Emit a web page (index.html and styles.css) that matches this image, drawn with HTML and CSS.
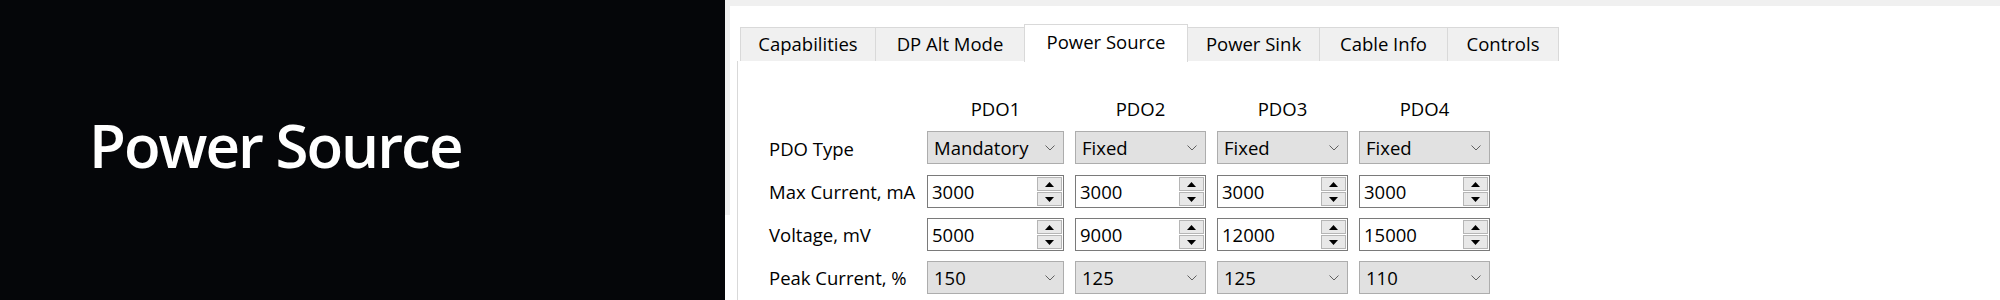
FILE: index.html
```html
<!DOCTYPE html>
<html lang="en">
<head>
    <meta charset="UTF-8">
    <meta name="viewport" content="width=device-width, initial-scale=1.0">
    <title>Power Source</title>
    <link rel="stylesheet" href="styles.css">
</head>
<body>
    <div class="screen">
        <!-- Slide caption -->
        <section class="hero">
            <h1 class="hero-title">Power Source</h1>
        </section>

        <!-- App window -->
        <section class="window">
            <div class="window-top"></div>
            <div class="window-body">
                <div class="window-edge"></div>
                <div class="tab-control">
                    <ul class="tabs">
                        <li class="tab tab-caps">Capabilities</li>
                        <li class="tab tab-dp">DP Alt Mode</li>
                        <li class="tab tab-source active">Power Source</li>
                        <li class="tab tab-sink">Power Sink</li>
                        <li class="tab tab-cable">Cable Info</li>
                        <li class="tab tab-controls">Controls</li>
                    </ul>

                    <div class="tab-page">
                        <div class="pdo-grid">
                            <!-- Header -->
                            <div></div>
                            <div class="pdo-head">PDO1</div>
                            <div class="pdo-head">PDO2</div>
                            <div class="pdo-head">PDO3</div>
                            <div class="pdo-head">PDO4</div>

                            <!-- PDO Type -->
                            <div class="field-label">PDO Type</div>
                            <div class="combo"><span>Mandatory</span><svg class="chevron" viewBox="0 0 10 6"><polyline points="0.5,0.5 5,5 9.5,0.5"/></svg></div>
                            <div class="combo"><span>Fixed</span><svg class="chevron" viewBox="0 0 10 6"><polyline points="0.5,0.5 5,5 9.5,0.5"/></svg></div>
                            <div class="combo"><span>Fixed</span><svg class="chevron" viewBox="0 0 10 6"><polyline points="0.5,0.5 5,5 9.5,0.5"/></svg></div>
                            <div class="combo"><span>Fixed</span><svg class="chevron" viewBox="0 0 10 6"><polyline points="0.5,0.5 5,5 9.5,0.5"/></svg></div>

                            <!-- Max Current -->
                            <div class="field-label">Max Current, mA</div>
                            <div class="spin"><span class="spin-value">3000</span><div class="spin-buttons"><div class="spin-btn"><svg viewBox="0 0 9 5"><polygon points="0,5 4.5,0 9,5"/></svg></div><div class="spin-btn"><svg viewBox="0 0 9 5"><polygon points="0,0 4.5,5 9,0"/></svg></div></div></div>
                            <div class="spin"><span class="spin-value">3000</span><div class="spin-buttons"><div class="spin-btn"><svg viewBox="0 0 9 5"><polygon points="0,5 4.5,0 9,5"/></svg></div><div class="spin-btn"><svg viewBox="0 0 9 5"><polygon points="0,0 4.5,5 9,0"/></svg></div></div></div>
                            <div class="spin"><span class="spin-value">3000</span><div class="spin-buttons"><div class="spin-btn"><svg viewBox="0 0 9 5"><polygon points="0,5 4.5,0 9,5"/></svg></div><div class="spin-btn"><svg viewBox="0 0 9 5"><polygon points="0,0 4.5,5 9,0"/></svg></div></div></div>
                            <div class="spin"><span class="spin-value">3000</span><div class="spin-buttons"><div class="spin-btn"><svg viewBox="0 0 9 5"><polygon points="0,5 4.5,0 9,5"/></svg></div><div class="spin-btn"><svg viewBox="0 0 9 5"><polygon points="0,0 4.5,5 9,0"/></svg></div></div></div>

                            <!-- Voltage -->
                            <div class="field-label">Voltage, mV</div>
                            <div class="spin"><span class="spin-value">5000</span><div class="spin-buttons"><div class="spin-btn"><svg viewBox="0 0 9 5"><polygon points="0,5 4.5,0 9,5"/></svg></div><div class="spin-btn"><svg viewBox="0 0 9 5"><polygon points="0,0 4.5,5 9,0"/></svg></div></div></div>
                            <div class="spin"><span class="spin-value">9000</span><div class="spin-buttons"><div class="spin-btn"><svg viewBox="0 0 9 5"><polygon points="0,5 4.5,0 9,5"/></svg></div><div class="spin-btn"><svg viewBox="0 0 9 5"><polygon points="0,0 4.5,5 9,0"/></svg></div></div></div>
                            <div class="spin"><span class="spin-value">12000</span><div class="spin-buttons"><div class="spin-btn"><svg viewBox="0 0 9 5"><polygon points="0,5 4.5,0 9,5"/></svg></div><div class="spin-btn"><svg viewBox="0 0 9 5"><polygon points="0,0 4.5,5 9,0"/></svg></div></div></div>
                            <div class="spin"><span class="spin-value">15000</span><div class="spin-buttons"><div class="spin-btn"><svg viewBox="0 0 9 5"><polygon points="0,5 4.5,0 9,5"/></svg></div><div class="spin-btn"><svg viewBox="0 0 9 5"><polygon points="0,0 4.5,5 9,0"/></svg></div></div></div>

                            <!-- Peak Current -->
                            <div class="field-label">Peak Current, %</div>
                            <div class="combo"><span>150</span><svg class="chevron" viewBox="0 0 10 6"><polyline points="0.5,0.5 5,5 9.5,0.5"/></svg></div>
                            <div class="combo"><span>125</span><svg class="chevron" viewBox="0 0 10 6"><polyline points="0.5,0.5 5,5 9.5,0.5"/></svg></div>
                            <div class="combo"><span>125</span><svg class="chevron" viewBox="0 0 10 6"><polyline points="0.5,0.5 5,5 9.5,0.5"/></svg></div>
                            <div class="combo"><span>110</span><svg class="chevron" viewBox="0 0 10 6"><polyline points="0.5,0.5 5,5 9.5,0.5"/></svg></div>
                        </div>
                    </div>
                </div>
            </div>
        </section>
    </div>
</body>
</html>
```

FILE: styles.css
```css
body {
    margin: 0;
    padding: 0;
    background-color: #fff;
    font-family: "Open Sans", "Noto Sans", sans-serif;
    color: #000;
}

.screen {
    display: flex;
    width: 2000px;
    height: 300px;
    overflow: hidden;
}

/* Left caption */
.hero {
    width: 725px;
    flex: 0 0 725px;
    background-color: #050609;
    display: flex;
    align-items: center;
    padding-left: 89px;
    padding-bottom: 10px;
    box-sizing: border-box;
}

.hero-title {
    margin: 0;
    color: #fff;
    font-size: 60px;
    font-weight: 600;
    letter-spacing: -2px;
    line-height: 1;
}

/* Window */
.window {
    flex: 1;
    display: flex;
    flex-direction: column;
}

.window-top {
    height: 6px;
    background-color: #f0f0f0;
}

.window-body {
    flex: 1;
    display: flex;
}

.window-edge {
    width: 5px;
    height: 209px;
    background-color: #f0f0f0;
}

.tab-control {
    flex: 1;
    margin-left: 7px;
    display: flex;
    flex-direction: column;
}

/* Tabs */
.tabs {
    list-style: none;
    margin: 18px 0 0 0;
    padding: 0 0 0 3px;
    display: flex;
    align-items: flex-end;
    height: 37px;
}

.tab {
    height: 34px;
    margin-left: -1px;
    box-sizing: border-box;
    border: 1px solid #d9d9d9;
    border-bottom: none;
    background-color: #f0f0f0;
    font-size: 18.5px;
    line-height: 32px;
    text-align: center;
    white-space: nowrap;
}

.tab:first-child {
    margin-left: 0;
}

.tab.active {
    height: 38px;
    margin-bottom: -1px;
    background-color: #fff;
    position: relative;
    z-index: 1;
    line-height: 34px;
}

.tab-caps { width: 136px; }
.tab-dp { width: 150px; }
.tab-source { width: 164px; }
.tab-sink { width: 133px; }
.tab-cable { width: 129px; }
.tab-controls { width: 112px; }

.tab-page {
    flex: 1;
    border-left: 1px solid #d9d9d9;
    padding: 36px 0 0 31px;
}

/* PDO table */
.pdo-grid {
    display: grid;
    grid-template-columns: 147px 137px 131px 131px 131px;
    grid-template-rows: 24px 34px 33px 33px 33px;
    column-gap: 11px;
    row-gap: 10px;
    font-size: 18.5px;
}

.pdo-head {
    text-align: center;
    line-height: 24px;
}

.field-label {
    display: flex;
    align-items: center;
    white-space: nowrap;
}

.combo {
    height: 33px;
    box-sizing: border-box;
    display: flex;
    align-items: center;
    justify-content: space-between;
    padding: 0 8px 0 6px;
    background-color: #e1e1e1;
    border: 1px solid #adadad;
}

.chevron {
    width: 10px;
    height: 6px;
    fill: none;
    stroke: #606060;
    stroke-width: 1;
}

.spin {
    height: 33px;
    box-sizing: border-box;
    display: flex;
    align-items: stretch;
    background-color: #fff;
    border: 1px solid #7a7a7a;
}

.spin-value {
    flex: 1;
    display: flex;
    align-items: center;
    padding-left: 4px;
}

.spin-buttons {
    width: 25px;
    margin: 1px 1px 1px 0;
    display: flex;
    flex-direction: column;
    gap: 1px;
}

.spin-btn {
    flex: 1;
    display: flex;
    align-items: center;
    justify-content: center;
    background-color: #e8e8e8;
    border: 1px solid #b5b5b5;
}

.spin-btn svg {
    width: 9px;
    height: 5px;
    fill: #000;
}
```
